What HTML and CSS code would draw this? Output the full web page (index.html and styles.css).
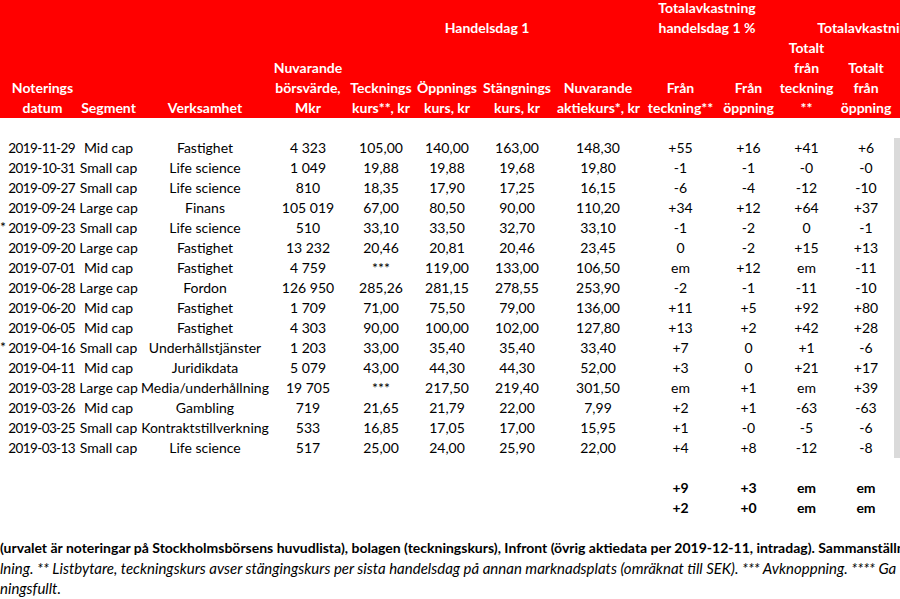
FILE: index.html
```html
<!DOCTYPE html>
<html lang="sv">
<head>
<meta charset="utf-8">
<title>Noteringar</title>
<link rel="stylesheet" href="styles.css">
</head>
<body>
<div class="sheet">
  <table class="grid">
    <colgroup>
      <col class="c-star"><col class="c-date"><col class="c-seg"><col class="c-verk"><col class="c-borsv">
      <col class="c-teck"><col class="c-opp"><col class="c-stang"><col class="c-nuv"><col class="c-frt">
      <col class="c-fro"><col class="c-tft"><col class="c-tfo"><col class="c-gray">
    </colgroup>
    <thead>
      <tr class="h-group">
        <th colspan="6"></th>
        <th colspan="2">Handelsdag 1</th>
        <th></th>
        <th colspan="2">Totalavkastning<br>handelsdag 1 %</th>
        <th colspan="3">Totalavkastning</th>
      </tr>
      <tr class="h-cols">
        <th></th>
        <th>Noterings<br>datum</th>
        <th>Segment</th>
        <th>Verksamhet</th>
        <th>Nuvarande<br>börsvärde,<br>Mkr</th>
        <th>Tecknings<br>kurs**, kr</th>
        <th>Öppnings<br>kurs, kr</th>
        <th>Stängnings<br>kurs, kr</th>
        <th>Nuvarande<br>aktiekurs*, kr</th>
        <th>Från<br>teckning**</th>
        <th>Från<br>öppning</th>
        <th>Totalt<br>från<br>teckning<br>**</th>
        <th>Totalt<br>från<br>öppning</th>
        <th></th>
      </tr>
    </thead>
    <tbody>
      <tr class="blank"><td colspan="14"></td></tr>
      <tr><td class="star"></td><td class="date">2019-11-29</td><td>Mid cap</td><td>Fastighet</td><td>4 323</td><td>105,00</td><td>140,00</td><td>163,00</td><td>148,30</td><td>+55</td><td>+16</td><td>+41</td><td>+6</td><td class="gray"></td></tr>
      <tr><td class="star"></td><td class="date">2019-10-31</td><td>Small cap</td><td>Life science</td><td>1 049</td><td>19,88</td><td>19,88</td><td>19,68</td><td>19,80</td><td>-1</td><td>-1</td><td>-0</td><td>-0</td><td class="gray"></td></tr>
      <tr><td class="star"></td><td class="date">2019-09-27</td><td>Small cap</td><td>Life science</td><td>810</td><td>18,35</td><td>17,90</td><td>17,25</td><td>16,15</td><td>-6</td><td>-4</td><td>-12</td><td>-10</td><td class="gray"></td></tr>
      <tr><td class="star"></td><td class="date">2019-09-24</td><td>Large cap</td><td>Finans</td><td>105 019</td><td>67,00</td><td>80,50</td><td>90,00</td><td>110,20</td><td>+34</td><td>+12</td><td>+64</td><td>+37</td><td class="gray"></td></tr>
      <tr><td class="star">*</td><td class="date">2019-09-23</td><td>Small cap</td><td>Life science</td><td>510</td><td>33,10</td><td>33,50</td><td>32,70</td><td>33,10</td><td>-1</td><td>-2</td><td>0</td><td>-1</td><td class="gray"></td></tr>
      <tr><td class="star"></td><td class="date">2019-09-20</td><td>Large cap</td><td>Fastighet</td><td>13 232</td><td>20,46</td><td>20,81</td><td>20,46</td><td>23,45</td><td>0</td><td>-2</td><td>+15</td><td>+13</td><td class="gray"></td></tr>
      <tr><td class="star"></td><td class="date">2019-07-01</td><td>Mid cap</td><td>Fastighet</td><td>4 759</td><td>***</td><td>119,00</td><td>133,00</td><td>106,50</td><td>em</td><td>+12</td><td>em</td><td>-11</td><td class="gray"></td></tr>
      <tr><td class="star"></td><td class="date">2019-06-28</td><td>Large cap</td><td>Fordon</td><td>126 950</td><td>285,26</td><td>281,15</td><td>278,55</td><td>253,90</td><td>-2</td><td>-1</td><td>-11</td><td>-10</td><td class="gray"></td></tr>
      <tr><td class="star"></td><td class="date">2019-06-20</td><td>Mid cap</td><td>Fastighet</td><td>1 709</td><td>71,00</td><td>75,50</td><td>79,00</td><td>136,00</td><td>+11</td><td>+5</td><td>+92</td><td>+80</td><td class="gray"></td></tr>
      <tr><td class="star"></td><td class="date">2019-06-05</td><td>Mid cap</td><td>Fastighet</td><td>4 303</td><td>90,00</td><td>100,00</td><td>102,00</td><td>127,80</td><td>+13</td><td>+2</td><td>+42</td><td>+28</td><td class="gray"></td></tr>
      <tr><td class="star">*</td><td class="date">2019-04-16</td><td>Small cap</td><td>Underhållstjänster</td><td>1 203</td><td>33,00</td><td>35,40</td><td>35,40</td><td>33,40</td><td>+7</td><td>0</td><td>+1</td><td>-6</td><td class="gray"></td></tr>
      <tr><td class="star"></td><td class="date">2019-04-11</td><td>Mid cap</td><td>Juridikdata</td><td>5 079</td><td>43,00</td><td>44,30</td><td>44,30</td><td>52,00</td><td>+3</td><td>0</td><td>+21</td><td>+17</td><td class="gray"></td></tr>
      <tr><td class="star"></td><td class="date">2019-03-28</td><td>Large cap</td><td>Media/underhållning</td><td>19 705</td><td>***</td><td>217,50</td><td>219,40</td><td>301,50</td><td>em</td><td>+1</td><td>em</td><td>+39</td><td class="gray"></td></tr>
      <tr><td class="star"></td><td class="date">2019-03-26</td><td>Mid cap</td><td>Gambling</td><td>719</td><td>21,65</td><td>21,79</td><td>22,00</td><td>7,99</td><td>+2</td><td>+1</td><td>-63</td><td>-63</td><td class="gray"></td></tr>
      <tr><td class="star"></td><td class="date">2019-03-25</td><td>Small cap</td><td>Kontraktstillverkning</td><td>533</td><td>16,85</td><td>17,05</td><td>17,00</td><td>15,95</td><td>+1</td><td>-0</td><td>-5</td><td>-6</td><td class="gray"></td></tr>
      <tr><td class="star"></td><td class="date">2019-03-13</td><td>Small cap</td><td>Life science</td><td>517</td><td>25,00</td><td>24,00</td><td>25,90</td><td>22,00</td><td>+4</td><td>+8</td><td>-12</td><td>-8</td><td class="gray"></td></tr>
      <tr class="blank"><td colspan="14"></td></tr>
      <tr class="total"><td colspan="9"></td><td>+9</td><td>+3</td><td>em</td><td>em</td><td></td></tr>
      <tr class="total"><td colspan="9"></td><td>+2</td><td>+0</td><td>em</td><td>em</td><td></td></tr>
    </tbody>
  </table>
  <div class="notes">
    <p class="note-src">(urvalet är noteringar på Stockholmsbörsens huvudlista), bolagen (teckningskurs), Infront (övrig aktiedata per 2019-12-11, intradag). Sammanställning</p>
    <p class="note-it">lning. ** Listbytare, teckningskurs avser stängingskurs per sista handelsdag på annan marknadsplats (omräknat till SEK). *** Avknoppning. **** Ga</p>
    <p class="note-it">ningsfullt.</p>
  </div>
</div>
</body>
</html>
```

FILE: styles.css
```css
html, body {
  margin: 0;
  padding: 0;
  background: #ffffff;
}

body {
  width: 900px;
  height: 599px;
  overflow: hidden;
  font-family: Lato, "Liberation Sans", sans-serif;
  font-size: 14px;
  color: #000000;
}

.sheet {
  margin-top: -2px;
  width: 957px;
}

.grid {
  border-collapse: collapse;
  table-layout: fixed;
  width: 957px;
}

.grid th,
.grid td {
  padding: 0;
  height: 20px;
  line-height: 20px;
  text-align: center;
  white-space: nowrap;
  overflow: visible;
}

.c-star { width: 7px; }
.c-date { width: 71px; }
.c-seg { width: 61px; }
.c-verk { width: 132px; }
.c-borsv { width: 74px; }
.c-teck { width: 72px; }
.c-opp { width: 60px; }
.c-stang { width: 80px; }
.c-nuv { width: 82px; }
.c-frt { width: 83px; }
.c-fro { width: 53px; }
.c-tft { width: 63px; }
.c-tfo { width: 56px; }
.c-gray { width: 63px; }

.grid thead th {
  background: #ff0000;
  color: #ffffff;
  font-weight: 700;
  vertical-align: bottom;
}

.h-group th { height: 40px; }
.h-cols th { height: 80px; }

.grid td.star {
  text-align: left;
  vertical-align: top;
  line-height: 18px;
}

.grid td.date {
  font-size: 13.5px;
  letter-spacing: -0.6px;
  text-align: right;
  padding-right: 3px;
}

.grid td.gray {
  background: #dadada;
}

.total td {
  font-weight: 700;
}

.notes {
  margin-top: 20px;
  width: 900px;
  overflow: hidden;
}

.notes p {
  margin: 0;
  height: 20px;
  line-height: 20px;
  white-space: nowrap;
}

.note-src { font-weight: 700; }
.note-it {
  font-style: italic;
  font-size: 15px;
}
```
